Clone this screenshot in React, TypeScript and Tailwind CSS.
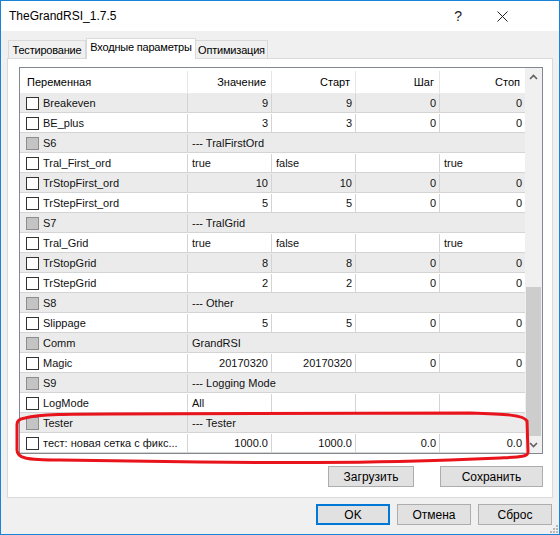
type Row = { name: string; vals?: string[]; section?: string };

const rows: Row[] = [
  { name: "Breakeven", vals: ["9", "9", "0", "0"] },
  { name: "BE_plus", vals: ["3", "3", "0", "0"] },
  { name: "S6", section: "--- TralFirstOrd" },
  { name: "Tral_First_ord", vals: ["true", "false", "", "true"] },
  { name: "TrStopFirst_ord", vals: ["10", "10", "0", "0"] },
  { name: "TrStepFirst_ord", vals: ["5", "5", "0", "0"] },
  { name: "S7", section: "--- TralGrid" },
  { name: "Tral_Grid", vals: ["true", "false", "", "true"] },
  { name: "TrStopGrid", vals: ["8", "8", "0", "0"] },
  { name: "TrStepGrid", vals: ["2", "2", "0", "0"] },
  { name: "S8", section: "--- Other" },
  { name: "Slippage", vals: ["5", "5", "0", "0"] },
  { name: "Comm", section: "GrandRSI" },
  { name: "Magic", vals: ["20170320", "20170320", "0", "0"] },
  { name: "S9", section: "--- Logging Mode" },
  { name: "LogMode", vals: ["All", "", "", ""] },
  { name: "Tester", section: "--- Tester" },
  { name: "тест: новая сетка с фикс...", vals: ["1000.0", "1000.0", "0.0", "0.0"] },
];

const colW = ["w-[84px]", "w-[84px]", "w-[84px]", "w-[85px]"];

const Check = ({ gray }: { gray?: boolean }) => (
  <span
    className={
      gray
        ? "w-[13px] h-[13px] border border-[#8c8c8c] bg-[#c4c4c4] shrink-0"
        : "w-[13px] h-[13px] border border-[#333333] bg-white shrink-0"
    }
  />
);

const Btn = ({ label, w, primary }: { label: string; w: string; primary?: boolean }) => (
  <div
    className={`${w} h-[21px] flex items-center justify-center bg-[#e1e1e1] text-[12px] text-black whitespace-nowrap ${
      primary ? "border-2 border-[#0078d7]" : "border border-[#adadad]"
    }`}
  >
    {label}
  </div>
);

const Chevron = ({ down }: { down?: boolean }) => (
  <svg width="9" height="6" viewBox="0 0 9 6">
    <path
      d={down ? "M1 1 L4.5 4.5 L8 1" : "M1 5 L4.5 1.5 L8 5"}
      fill="none"
      stroke="#606060"
      strokeWidth="1.6"
    />
  </svg>
);

export default function App() {
  return (
    <div className="relative w-[560px] h-[535px] border border-[#1883d7] bg-[#f0f0f0] font-['Liberation_Sans',Arial,sans-serif] text-[11px] text-[#111] flex flex-col overflow-hidden">
      {/* title bar */}
      <div className="h-[30px] bg-white flex items-center pl-[8px] shrink-0">
        <span className="text-[12px] text-black">TheGrandRSI_1.7.5</span>
        <span className="ml-auto mr-[35px] text-[14px] text-[#222]">?</span>
        <svg width="11" height="11" viewBox="0 0 11 11" className="mr-[51px]">
          <path d="M0.5 0.5 L10.5 10.5 M10.5 0.5 L0.5 10.5" stroke="#222" strokeWidth="1" />
        </svg>
      </div>

      {/* tabs */}
      <div className="h-[27px] flex items-end pl-[7px] shrink-0 whitespace-nowrap text-[11px] tracking-[-0.2px] text-black">
        <div className="w-[78px] h-[18px] border border-b-0 border-[#d9d9d9] bg-[#f0f0f0] flex items-center justify-center pt-[1px]">
          Тестирование
        </div>
        <div className="relative z-10 -mb-px w-[110px] h-[21px] border border-b-0 border-[#d9d9d9] bg-white flex items-center justify-center pb-[3px]">
          Входные параметры
        </div>
        <div className="w-[72px] h-[18px] border border-b-0 border-l-0 border-[#d9d9d9] bg-[#f0f0f0] flex items-center justify-center pt-[1px]">
          Оптимизация
        </div>
      </div>

      {/* panel */}
      <div className="mx-[6px] h-[440px] border border-[#d9d9d9] bg-white flex flex-col pl-[11px] pt-[8px] shrink-0">
        <div className="w-[524px] border border-[#828790] flex">
          <div className="w-[505px] flex flex-col">
            <div className="h-[25px] flex bg-white text-black pt-[3px]">
              <div className="w-[168px] border-r border-[#e5e5e5] flex items-center pl-[7px]">Переменная</div>
              {["Значение", "Старт", "Шаг", "Стоп"].map((h, i) => (
                <div key={h} className={`${colW[i]} ${i < 3 ? "border-r border-[#e5e5e5]" : ""} flex items-center justify-end pr-[5px]`}>
                  {h}
                </div>
              ))}
            </div>
            {rows.map((r, idx) => (
              <div
                key={r.name}
                className={`h-[20px] flex border-b border-[#d4d4d4] pt-px ${idx % 2 === 0 ? "bg-[#ebebeb]" : "bg-white"}`}
              >
                <div className="w-[168px] border-r border-[#d4d4d4] flex items-center pl-[6px] gap-[4px] shrink-0">
                  <Check gray={!!r.section} />
                  <span className="whitespace-nowrap">{r.name}</span>
                </div>
                {r.section ? (
                  <div className="flex-1 flex items-center pl-[4px]">{r.section}</div>
                ) : (
                  r.vals!.map((v, i) => (
                    <div
                      key={i}
                      className={`${colW[i]} ${i < 3 ? "border-r border-[#d4d4d4]" : ""} flex items-center ${
                        /^[\d.]+$/.test(v) ? "justify-end pr-[3px]" : "pl-[4px]"
                      }`}
                    >
                      {v}
                    </div>
                  ))
                )}
              </div>
            ))}
          </div>
          {/* scrollbar */}
          <div className="w-[17px] bg-[#f0f0f0] flex flex-col">
            <div className="h-[17px] flex items-center justify-center">
              <Chevron />
            </div>
            <div className="h-[202px]" />
            <div className="flex-1 mx-[1px] bg-[#cdcdcd]" />
            <div className="h-[17px] flex items-center justify-center">
              <Chevron down />
            </div>
          </div>
        </div>
        <div className="w-[524px] flex justify-end gap-[26px] mt-[12px]">
          <Btn label="Загрузить" w="w-[86px]" />
          <Btn label="Сохранить" w="w-[103px]" />
        </div>
      </div>

      {/* dialog buttons */}
      <div className="flex justify-end gap-[7px] pr-[7px] mt-[6px]">
        <Btn label="OK" w="w-[74px]" primary />
        <Btn label="Отмена" w="w-[74px]" />
        <Btn label="Сброс" w="w-[74px]" />
      </div>

      {/* size grip */}
      <svg className="absolute right-[1px] bottom-[1px]" width="10" height="10" viewBox="0 0 10 10">
        {[
          [8, 2],
          [5, 5],
          [8, 5],
          [2, 8],
          [5, 8],
          [8, 8],
        ].map(([x, y]) => (
          <rect key={`${x}-${y}`} x={x} y={y} width="2" height="2" fill="#b8b8b8" />
        ))}
      </svg>

      {/* red hand-drawn marker */}
      <svg className="absolute left-[-1px] top-[-1px] pointer-events-none" width="560" height="535" viewBox="0 0 560 535">
        <path
          d="M25 418 C40 414 70 414 110 414 L470 413 C505 414 524 415 527 421 L528 452 C528 457 520 457 500 458 L450 460 C400 462 300 463 200 462 L60 460 C25 460 17 458 17 450 L17 425 C17 420 20 419 25 418 Z"
          fill="none"
          stroke="#e8131b"
          strokeWidth="3"
        />
      </svg>
    </div>
  );
}
